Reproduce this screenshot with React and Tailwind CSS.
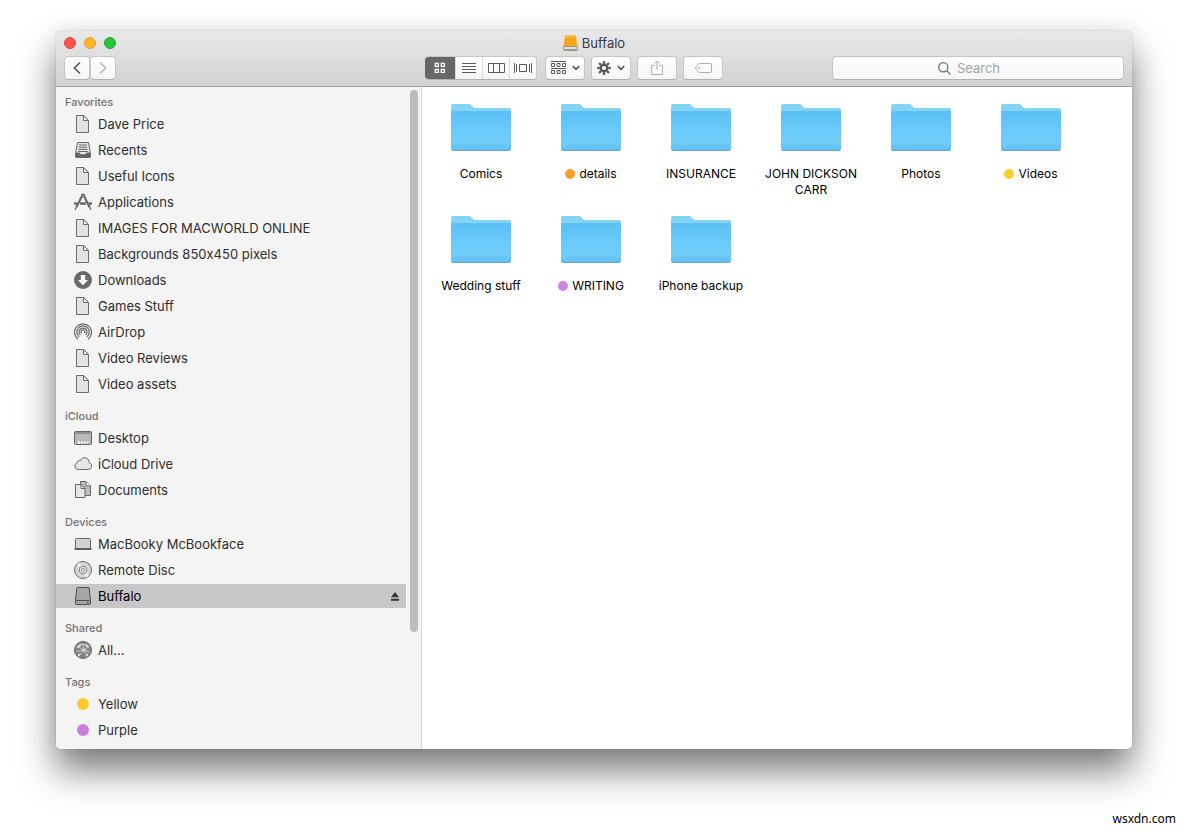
import React, { useState } from 'react';

const DocIcon = () => (
  <svg viewBox="0 0 18 18" className="h-[18px] w-[18px]" fill="#e3e3e3" stroke="#6c6c6c">
    <path d="M2.5 .5h7.2l4.8 4.8v12.2h-12z" />
    <path d="M9.5 .5v5h5z" fill="#f4f4f4" />
  </svg>
);

const RecentsIcon = () => (
  <svg viewBox="0 0 18 18" className="h-[18px] w-[18px]" fill="none" stroke="#666">
    <path d="M3.5 1.5h11l1.8 10v4.5h-14.6v-4.5z" fill="#e6e6e6" />
    <path d="M5 4h8M4.8 6.2h8.4M4.5 8.4h9M4.2 10.5h9.6" />
    <path d="M1.5 12h4l1 1.8h5l1-1.8h4v3.2q0 1.3-1.3 1.3H2.8q-1.3 0-1.3-1.3z" fill="#666" />
  </svg>
);

const AppsIcon = () => (
  <svg viewBox="0 0 18 18" className="h-[18px] w-[18px]" fill="none" stroke="#6a6a6a">
    <path d="M8.3 2.5L2.2 14.5M9.7 2.5L15.800 14.500" strokeWidth="2.2" />
    <path d="M7.300 2.200Q9 .6 10.700 2.200" strokeWidth="1.6" />
    <path d="M2 14.500l-.8 2.300M16 14.500l.8 2.300" strokeWidth="1.4" />
    <path d="M0 10.500h3M6 10.500h6M15 10.500h3" strokeWidth="2.4" />
  </svg>
);

const DownloadsIcon = () => (
  <svg viewBox="0 0 18 18" className="h-[18px] w-[18px]">
    <circle cx="9" cy="9" r="9" fill="#6b6b6b" />
    <path d="M6.8 4h4.4v5h2.8l-5 5.300L4 9h2.800z" fill="#fff" />
  </svg>
);

const AirDropIcon = () => (
  <svg viewBox="0 0 18 18" className="h-[18px] w-[18px]" fill="none" stroke="#6b6b6b" strokeWidth="1.2">
    <path d="M4 16.200a8.500 8.500 0 1 1 10 0" />
    <path d="M5.200 14a6.200 6.200 0 1 1 7.600 0" />
    <path d="M6.300 12a4 4 0 1 1 5.400 0" />
    <path d="M7.700 10.300a2 2 0 1 1 2.600 0" />
  </svg>
);

const DesktopIcon = () => (
  <svg viewBox="0 0 18 18" className="h-[18px] w-[18px]">
    <rect x=".5" y="2.500" width="17" height="13" rx="1" fill="#b9b9b9" stroke="#666" />
    <path d="M1 4h16" stroke="#666" />
    <path d="M4 13.500h2M7 13.500h2M10 13.500h2M13 13.500h1.500" stroke="#fff" strokeWidth="2" />
  </svg>
);

const CloudIcon = () => (
  <svg viewBox="0 0 18 18" className="h-[18px] w-[18px]">
    <path
      d="M4 14.500A3.400 3.400 0 0 1 3 8a2.500 2.500 0 0 1 3.300-2.400 4.700 4.700 0 0 1 9 2.100 3.500 3.500 0 0 1-1.300 6.800z"
      fill="#e6e6e6"
      stroke="#6b6b6b"
    />
  </svg>
);

const DocumentsIcon = () => (
  <svg viewBox="0 0 18 18" className="h-[18px] w-[18px]" stroke="#666">
    <path d="M6.500 .5h5.500l4.500 4.500v9.500h-10z" fill="#bdbdbd" />
    <path d="M12 .5v4.500h4.500" fill="#eee" />
    <path d="M1.500 3.500h5.500l4 4v9h-9.500z" fill="#e6e6e6" />
    <path d="M7 3.500v4h4z" fill="#f6f6f6" />
  </svg>
);

const LaptopIcon = () => (
  <svg viewBox="0 0 18 18" className="h-[18px] w-[18px]">
    <rect x="1.500" y="3.500" width="15" height="10" rx="1" fill="#d2d2d2" stroke="#666" />
    <path d="M0 13h18l-1 2H1z" fill="#5f5f5f" />
  </svg>
);

const DiscIcon = () => (
  <svg viewBox="0 0 18 18" className="h-[18px] w-[18px]" stroke="#6b6b6b">
    <circle cx="9" cy="9" r="8.500" fill="#d6d6d6" />
    <path d="M9 9L3 4a7.500 7.500 0 0 1 3-2.500zM9 9l6 5a7.500 7.500 0 0 1-3 2.500z" fill="#f2f2f2" stroke="none" />
    <circle cx="9" cy="9" r="3.800" fill="#e8e8e8" strokeWidth=".8" />
    <circle cx="9" cy="9" r="1.500" fill="#fff" strokeWidth=".8" />
  </svg>
);

const DriveIcon = () => (
  <svg viewBox="0 0 18 18" className="h-[18px] w-[18px]" stroke="#4d4d4d">
    <path d="M4 .5h10q1.200 0 1.300 1.200l1.200 12v2.300q0 1.500-1.500 1.500H3q-1.500 0-1.500-1.500v-2.300l1.200-12Q2.800.5 4 .5z" fill="#a6a6a6" />
    <path d="M1.800 14.500q.4-1 1.400-1h11.600q1 0 1.400 1" fill="none" />
    <path d="M13 15.700h1.500" stroke="#222" />
  </svg>
);

const GlobeIcon = () => (
  <svg viewBox="0 0 18 18" className="h-[18px] w-[18px]" fill="none" stroke="#e4e4e4">
    <circle cx="9" cy="9" r="8.500" fill="#858585" stroke="#6b6b6b" />
    <path d="M3.500 5.500L9 3l5 3-4 3zM9 3l1 6-5 5.500M10 9l3 5.500M2.500 10.500L10 9l5.500 2" strokeWidth=".7" />
    <g fill="#ddd" stroke="none">
      <path d="M2.500 6.500L5 3.500l3-1-1.500 3-2 1.500zM11 2.500l3 1.500 1.500 3-3-1z" />
      <circle cx="10" cy="9" r="1.500" />
      <circle cx="5" cy="14" r="1.200" />
      <circle cx="13" cy="14" r="1.200" />
    </g>
  </svg>
);

const YellowTag = () => <span className="mx-auto block h-3 w-3 rounded-full bg-[#f5c92f]" />;
const PurpleTag = () => <span className="mx-auto block h-3 w-3 rounded-full bg-[#cc7ddf]" />;

const sections = [
  {
    title: 'Favorites',
    items: [
      { name: 'Dave Price', icon: DocIcon },
      { name: 'Recents', icon: RecentsIcon },
      { name: 'Useful Icons', icon: DocIcon },
      { name: 'Applications', icon: AppsIcon },
      { name: 'IMAGES FOR MACWORLD ONLINE', icon: DocIcon },
      { name: 'Backgrounds 850x450 pixels', icon: DocIcon },
      { name: 'Downloads', icon: DownloadsIcon },
      { name: 'Games Stuff', icon: DocIcon },
      { name: 'AirDrop', icon: AirDropIcon },
      { name: 'Video Reviews', icon: DocIcon },
      { name: 'Video assets', icon: DocIcon },
    ],
  },
  {
    title: 'iCloud',
    items: [
      { name: 'Desktop', icon: DesktopIcon },
      { name: 'iCloud Drive', icon: CloudIcon },
      { name: 'Documents', icon: DocumentsIcon },
    ],
  },
  {
    title: 'Devices',
    items: [
      { name: 'MacBooky McBookface', icon: LaptopIcon },
      { name: 'Remote Disc', icon: DiscIcon },
      { name: 'Buffalo', icon: DriveIcon, ejectable: true },
    ],
  },
  { title: 'Shared', items: [{ name: 'All...', icon: GlobeIcon }] },
  {
    title: 'Tags',
    items: [
      { name: 'Yellow', icon: YellowTag },
      { name: 'Purple', icon: PurpleTag },
    ],
  },
];

const folders = [
  { name: 'Comics' },
  { name: 'details', dot: 'bg-[#f7a02c]' },
  { name: 'INSURANCE' },
  { name: 'JOHN DICKSON CARR' },
  { name: 'Photos' },
  { name: 'Videos', dot: 'bg-[#fbcf2f]' },
  { name: 'Wedding stuff' },
  { name: 'WRITING', dot: 'bg-[#d084e3]' },
  { name: 'iPhone backup' },
];

const FolderIcon = () => (
  <svg viewBox="0 0 60 48" className="h-12 w-[60px]">
    <defs>
      <linearGradient id="front" x1="0" y1="0" x2="0" y2="1">
        <stop offset="0" stopColor="#5bc0f6" />
        <stop offset=".7" stopColor="#70cdfb" />
        <stop offset="1" stopColor="#68c6f5" />
      </linearGradient>
    </defs>
    <path d="M0 3Q0 1 2 1h16q1.500 0 2.500 1.200l1.500 1.800q.9 1 2.500 1H58q2 0 2 2V20H0z" fill="#83d3f4" />
    <path d="M0 9q0-1 1-1h58q1 0 1 1V45.500q0 2.500-2 2.500H2q-2 0-2-2.500z" fill="url(#front)" />
    <path d="M0 43h60M0 45h60" stroke="#5fb9e8" strokeWidth=".5" />
    <path d="M.2 46.600h59.600q-.5 1.400-1.800 1.400H2Q.7 48 .2 46.600z" fill="#67a9cc" />
  </svg>
);

const IconView = () => (
  <svg viewBox="0 0 12 12" className="h-3 w-3" fill="none" stroke="currentColor" strokeWidth="1.3">
    <path d="M1.300 1.300h3v3h-3zM7.300 1.300h3v3h-3zM1.300 7.300h3v3h-3zM7.300 7.300h3v3h-3z" />
  </svg>
);
const ListView = () => (
  <svg viewBox="0 0 14 12" className="h-3 w-[14px]" stroke="currentColor">
    <path d="M0 1.500h14M0 4.500h14M0 7.500h14M0 10.500h14" />
  </svg>
);
const ColumnView = () => (
  <svg viewBox="0 0 17 12" className="h-3 w-[17px]" fill="none" stroke="currentColor">
    <path d="M.5 1.500h16v9H.5zM5.500 1.500v9M11.500 1.500v9" />
  </svg>
);
const CoverView = () => (
  <svg viewBox="0 0 18 12" className="h-3 w-[18px]" fill="none" stroke="currentColor">
    <path d="M.5 1v10M2.500 2v8M5.500 2.500h7v7h-7zM15.500 2v8M17.500 1v10" />
  </svg>
);

const views = [
  { name: 'Icons', icon: IconView },
  { name: 'List', icon: ListView },
  { name: 'Columns', icon: ColumnView },
  { name: 'Cover Flow', icon: CoverView },
];

const Chevron = () => (
  <svg viewBox="0 0 8 6" className="h-[6px] w-2" fill="none" stroke="#4a4a4a" strokeWidth="1.5">
    <path d="M.8 1L4 4.300 7.200 1" />
  </svg>
);

const buttonStyle =
  'flex h-6 items-center justify-center rounded border border-[#c6c6c6] border-b-[#b2b2b2] bg-linear-to-b from-white to-[#f5f5f5]';

const Toolbar = () => {
  const [view, setView] = useState('Icons');

  return (
    <div className="flex h-6 items-center">
      <div className="flex w-[361px] shrink-0">
        <button aria-label="Back" className={`${buttonStyle} w-[26px]`}>
          <svg viewBox="0 0 8 14" className="h-[14px] w-2" fill="none" stroke="#505050" strokeWidth="1.5">
            <path d="M7 1.500L1.300 7 7 12.500" />
          </svg>
        </button>
        <button aria-label="Forward" className={`${buttonStyle} w-[26px]`}>
          <svg viewBox="0 0 8 14" className="h-[14px] w-2" fill="none" stroke="#b5b5b5" strokeWidth="1.5">
            <path d="M1 1.500L6.700 7 1 12.500" />
          </svg>
        </button>
      </div>

      <div className="flex gap-[6px]">
        <div className="mr-[2px] flex h-6 overflow-hidden rounded border-y border-r border-[#c6c6c6] border-b-[#b2b2b2] bg-linear-to-b from-white to-[#f5f5f5]">
          {views.map((item) => {
            const Icon = item.icon;
            const active = view === item.name;
            return (
              <button
                key={item.name}
                aria-label={item.name}
                aria-pressed={active}
                onClick={() => setView(item.name)}
                className={`flex items-center justify-center ${
                  active ? 'w-[30px] bg-[#676767] text-white' : 'w-[27px] border-l border-[#d9d9d9] text-[#5a5a5a]'
                }`}
              >
                <Icon />
              </button>
            );
          })}
        </div>

        <button aria-label="Arrange" className={`${buttonStyle} w-10 gap-[6px]`}>
          <svg viewBox="0 0 15 14" className="h-[14px] w-[15px]" fill="none" stroke="#5a5a5a">
            <path d="M0 .5h15M0 7.500h15" />
            <path d="M.5 2.500h3v3h-3zM6 2.500h3v3H6zM11.500 2.500h3v3h-3zM.5 9.500h3v3h-3zM6 9.500h3v3H6zM11.500 9.500h3v3h-3z" />
          </svg>
          <Chevron />
        </button>

        <button aria-label="Action" className={`${buttonStyle} w-10 gap-[6px]`}>
          <svg viewBox="0 0 14 14" className="h-[14px] w-[14px]" fill="none" stroke="#5a5a5a">
            <circle cx="7" cy="7" r="3.400" strokeWidth="2.6" />
            <path
              d="M7 0v2.500M7 11.500V14M0 7h2.500M11.500 7H14M2.050 2.050l1.800 1.800M10.150 10.150l1.800 1.800M2.050 11.950l1.800-1.800M10.150 3.850l1.800-1.800"
              strokeWidth="2.2"
            />
          </svg>
          <Chevron />
        </button>

        <button aria-label="Share" className={`${buttonStyle} w-10`}>
          <svg viewBox="0 0 12 16" className="h-4 w-3" fill="none" stroke="#b0b0b0">
            <path d="M4 5.500H.5v9h11v-9H8M6 1v9M3.500 3.500L6 1l2.500 2.500" />
          </svg>
        </button>

        <button aria-label="Edit Tags" className={`${buttonStyle} w-10`}>
          <svg viewBox="0 0 17 10" className="h-[10px] w-[17px]" fill="none" stroke="#b0b0b0">
            <path d="M5 .5h10q1.500 0 1.500 1.500v6q0 1.500-1.500 1.500H5Q4 9.500 3.200 8.700L.9 6Q.1 5 .9 4l2.300-2.700Q4 .5 5 .5z" />
            <circle cx="4" cy="5" r=".8" />
          </svg>
        </button>
      </div>

      <label className={`${buttonStyle} ml-auto w-[292px] gap-[6px] pr-[18px]`}>
        <svg viewBox="0 0 13 13" className="h-[13px] w-[13px]" fill="none" stroke="#6a6a6a" strokeWidth="1.2">
          <circle cx="5.300" cy="5.300" r="4.600" />
          <path d="M8.700 8.700l3.800 3.800" />
        </svg>
        <input
          type="text"
          aria-label="Search"
          placeholder="Search"
          className="field-sizing-content bg-transparent text-[13px] leading-4 text-[#333] outline-none placeholder:text-[#a3a3a3]"
        />
      </label>
    </div>
  );
};

const Sidebar = () => {
  const [selected, setSelected] = useState('Buffalo');

  return (
    <aside className="flex w-[366px] shrink-0 border-r border-[#d8d8d8] bg-[#f4f4f4]">
      <nav className="flex flex-1 flex-col gap-[10px] pt-[5px] pb-[7px]">
        {sections.map((section) => (
          <section key={section.title}>
            <h2 className="pl-[9px] text-[11px] leading-5 font-medium text-[#727272]">{section.title}</h2>
            <ul className="flex flex-col gap-[2px]">
              {section.items.map((item) => {
                const Icon = item.icon;
                const active = selected === item.name;
                return (
                  <li
                    key={item.name}
                    className={`flex h-6 items-center pr-[7px] ${active ? 'bg-[#c7c7c7] text-black' : 'text-[#2e2e2e]'}`}
                  >
                    <a
                      href="#"
                      onClick={() => setSelected(item.name)}
                      className="flex flex-1 items-center gap-[6px] pl-[18px] text-[13px] leading-6"
                    >
                      <span className="w-[18px]">
                        <Icon />
                      </span>
                      {item.name}
                    </a>
                    {item.ejectable && (
                      <button aria-label={`Eject ${item.name}`}>
                        <svg viewBox="0 0 8 9" className="h-[9px] w-2" fill="#333">
                          <path d="M4 0l4 5.200H0zM0 6.700h8v2H0z" />
                        </svg>
                      </button>
                    )}
                  </li>
                );
              })}
            </ul>
          </section>
        ))}
      </nav>
      {/* scrollbar */}
      <div className="w-[15px] px-1 pt-[3px]">
        <div className="h-[542px] w-2 rounded-full bg-[#bdbdbd]" />
      </div>
    </aside>
  );
};

const App = () => {
  return (
    <div className="flex min-h-screen flex-col bg-white px-14 pt-[31px] font-['Inter','Liberation_Sans',sans-serif] [font-feature-settings:'calt'_0]">
      <div className="overflow-hidden rounded-[5px] shadow-[0_0_1px_rgba(0,0,0,0.5),0_22px_36px_rgba(0,0,0,0.5),0_0_24px_rgba(0,0,0,0.08)]">
        <header className="border-b border-[#a0a0a0] bg-linear-to-b from-[#e9e9e9] to-[#d2d2d2] px-2 pb-[6px]">
          <div className="mb-px grid h-6 grid-cols-3 items-center">
            <div className="flex gap-2">
              <button aria-label="Close" className="h-3 w-3 rounded-full border border-[#e0443e] bg-[#fb5350]" />
              <button aria-label="Minimize" className="h-3 w-3 rounded-full border border-[#dea034] bg-[#fdb62b]" />
              <button aria-label="Zoom" className="h-3 w-3 rounded-full border border-[#27a53a] bg-[#27c338]" />
            </div>
            <h1 className="flex items-center justify-center gap-1 text-[13px] leading-4 text-[#3a3a3a]">
              <svg viewBox="0 0 15 16" className="h-4 w-[15px]">
                <path d="M2 .5h11L14.300 12H.7z" fill="#f6a51c" />
                <path d="M2 .5h11l.3 2.500H1.700z" fill="#fbb935" />
                <path d="M.5 11.500h14v3q0 1-1 1h-12q-1 0-1-1z" fill="#dcdcd6" stroke="#8e8e88" strokeWidth=".8" />
                <path d="M1.200 14.800h12.600" stroke="#77776f" strokeWidth=".8" />
              </svg>
              Buffalo
            </h1>
          </div>
          <Toolbar />
        </header>

        <div className="flex bg-white">
          <Sidebar />
          <main className="grid flex-1 auto-rows-[112px] grid-cols-[repeat(auto-fill,110px)] pt-4 pl-1">
            {folders.map((folder) => (
              <button key={folder.name} className="flex flex-col items-center gap-[15px] px-2">
                <FolderIcon />
                <span className="flex items-center gap-1 text-center text-[12px] leading-4 text-black">
                  {folder.dot && <span className={`h-[10px] w-[10px] rounded-full ${folder.dot}`} />}
                  {folder.name}
                </span>
              </button>
            ))}
          </main>
        </div>
      </div>

      <footer className="mt-auto -mr-11 pb-[2px] text-right font-['Noto_Sans',sans-serif] text-[12px] leading-4 text-black">
        wsxdn.com
      </footer>
    </div>
  );
};

export default App;
